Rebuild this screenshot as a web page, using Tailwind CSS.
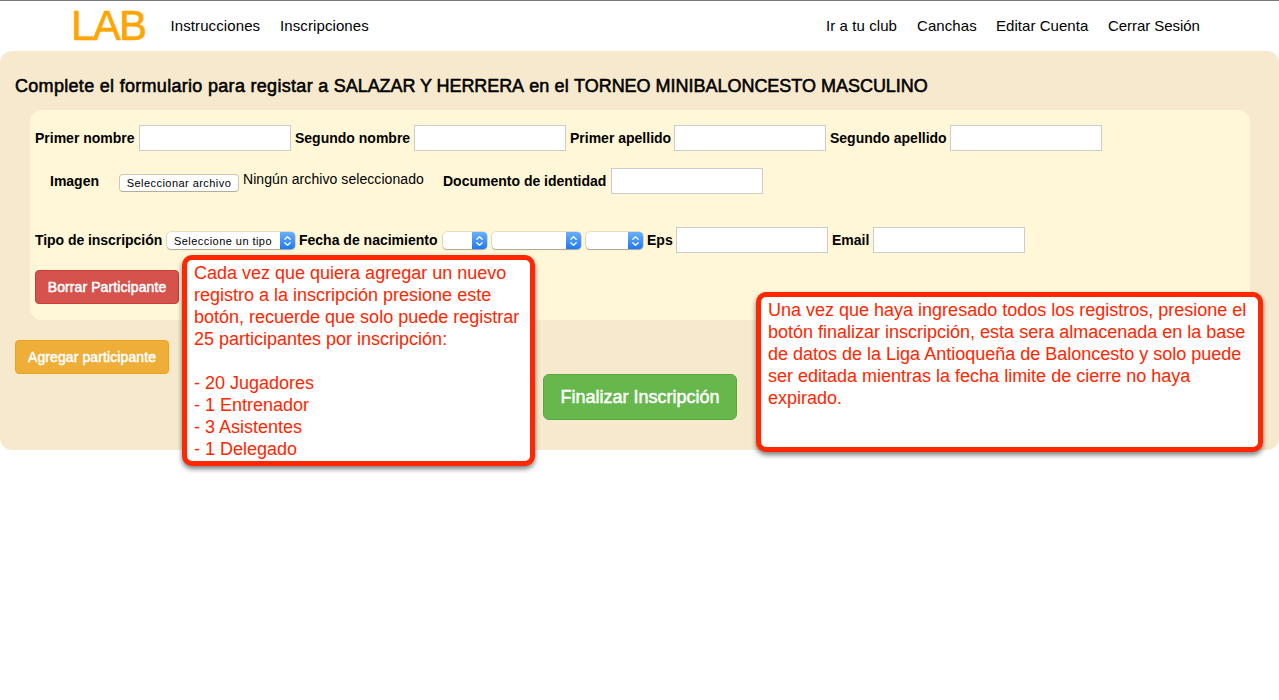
<!DOCTYPE html>
<html lang="es">
<head>
<meta charset="utf-8">
<title>LAB - Inscripciones</title>
<script src="https://cdn.jsdelivr.net/npm/@tailwindcss/browser@4"></script>
</head>
<body class="bg-white text-black font-['Liberation_Sans',Arial,sans-serif] text-sm overflow-hidden">
<svg class="hidden">
  <symbol id="arrows" viewBox="0 0 15 18"><path d="M4.8 7.3 7.5 4.7l2.7 2.6M4.8 10.7l2.7 2.6 2.7-2.6" fill="none" stroke="white" stroke-width="1.3" stroke-linecap="round" stroke-linejoin="round"/></symbol>
</svg>
<div class="relative h-[700px] w-[1279px] overflow-hidden">
  <header class="flex h-[51px] items-center border-t border-[#777] pl-[71px] pr-[79px] text-[15px] whitespace-nowrap">
    <a class="w-[99px] text-[42px] leading-[50px] tracking-[-1.7px] text-[#ffa500] [-webkit-text-stroke:0.6px_#ffa500]">LAB</a>
    <nav class="flex"><a class="w-[110px] pl-[0.5px] tracking-[0.1px]">Instrucciones</a><a class="tracking-[0.1px]">Inscripciones</a></nav>
    <nav class="ml-auto flex"><a class="w-[91px] tracking-[0.08px]">Ir a tu club</a><a class="w-[79px] tracking-[0.08px]">Canchas</a><a class="w-[112px] tracking-[0.05px]">Editar Cuenta</a><a class="w-[92px] tracking-[-0.05px]">Cerrar Sesión</a></nav>
  </header>

  <main class="h-[399px] rounded-xl bg-[#f7e9cd] px-[15px] pt-[25px]">
    <h1 class="h-[34px] text-lg leading-5 whitespace-nowrap [-webkit-text-stroke:0.55px_black]"><span class="tracking-[0.3px]">Complete el formulario para registar a </span><span class="tracking-[-0.07px]">SALAZAR Y HERRERA</span><span class="tracking-[0.13px]"> en el </span><span class="tracking-[-0.02px]">TORNEO MINIBALONCESTO MASCULINO</span></h1>
    <section class="ml-[15px] h-[210px] w-[1220px] rounded-xl bg-[#fff7d8] px-[5px] pt-[15px] whitespace-nowrap">
      <div class="flex h-[26px] items-center font-bold">
        <label class="w-[104px]">Primer nombre</label><input class="mr-1 h-[26px] w-[152px] border border-[#ccc] bg-white">
        <label class="w-[119px]">Segundo nombre</label><input class="mr-1 h-[26px] w-[152px] border border-[#ccc] bg-white">
        <label class="w-[104px]">Primer apellido</label><input class="mr-1 h-[26px] w-[152px] border border-[#ccc] bg-white">
        <label class="w-[120px]">Segundo apellido</label><input class="h-[26px] w-[152px] border border-[#ccc] bg-white">
      </div>
      <div class="mt-[17px] flex h-[26px] items-center pl-[15px] font-bold">
        <label class="w-[69px]">Imagen</label>
        <button class="mt-[3px] h-[18px] w-[120px] rounded-[4px] border border-[#cfc8b0] border-b-[#b5ae98] bg-white text-[11px] leading-4 font-normal tracking-[0.45px]">Seleccionar archivo</button>
        <span class="mb-1 ml-1 w-[200px] font-normal tracking-[0.07px]">Ningún archivo seleccionado</span>
        <label class="w-[168px]">Documento de identidad</label><input class="h-[26px] w-[152px] border border-[#ccc] bg-white">
      </div>
      <div class="mt-[33px] flex h-[26px] items-center font-bold">
        <label class="w-[132px] tracking-[-0.05px]">Tipo de inscripción</label>
        <div class="mt-px mr-1 flex h-[17px] w-[128px] overflow-hidden rounded-[4px] bg-white shadow-[0_1px_1px_rgba(0,0,0,0.25),0_0_0_0.5px_rgba(0,0,0,0.2)]"><span class="flex-1 pl-[7px] text-[11px] leading-[19px] font-normal tracking-[0.45px]">Seleccione un tipo</span><svg class="h-[18px] w-[15px] bg-linear-to-b from-[#68aefb] to-[#1575fa]"><use href="#arrows"/></svg></div>
        <label class="w-[144px]">Fecha de nacimiento</label>
        <div class="mt-px mr-[5px] flex h-[17px] w-[44px] justify-end overflow-hidden rounded-[4px] bg-white shadow-[0_1px_1px_rgba(0,0,0,0.25),0_0_0_0.5px_rgba(0,0,0,0.2)]"><svg class="h-[18px] w-[15px] bg-linear-to-b from-[#68aefb] to-[#1575fa]"><use href="#arrows"/></svg></div>
        <div class="mt-px mr-[5px] flex h-[17px] w-[89px] justify-end overflow-hidden rounded-[4px] bg-white shadow-[0_1px_1px_rgba(0,0,0,0.25),0_0_0_0.5px_rgba(0,0,0,0.2)]"><svg class="h-[18px] w-[15px] bg-linear-to-b from-[#68aefb] to-[#1575fa]"><use href="#arrows"/></svg></div>
        <div class="mt-px mr-1 flex h-[17px] w-[57px] justify-end overflow-hidden rounded-[4px] bg-white shadow-[0_1px_1px_rgba(0,0,0,0.25),0_0_0_0.5px_rgba(0,0,0,0.2)]"><svg class="h-[18px] w-[15px] bg-linear-to-b from-[#68aefb] to-[#1575fa]"><use href="#arrows"/></svg></div>
        <label class="w-[29px]">Eps</label><input class="mr-1 h-[26px] w-[152px] border border-[#ccc] bg-white">
        <label class="w-[41px]">Email</label><input class="h-[26px] w-[152px] border border-[#ccc] bg-white">
      </div>
      <button class="mt-[17px] block h-[34px] w-[144px] rounded-[4px] border border-[#ca3d36] bg-[#d5534c] tracking-[0.1px] text-white [-webkit-text-stroke:0.5px_white]">Borrar Participante</button>
    </section>
    <button class="mt-5 block h-[34px] w-[154px] rounded-[4px] border border-[#eca31a] bg-[#efae38] tracking-[0.1px] whitespace-nowrap text-white [-webkit-text-stroke:0.5px_white]">Agregar participante</button>
    <button class="ml-[528px] block h-[46px] w-[194px] rounded-md border border-[#55aa3c] bg-[#66b84c] text-lg whitespace-nowrap text-white [-webkit-text-stroke:0.5px_white]">Finalizar Inscripción</button>
  </main>

  <aside class="absolute top-[255px] left-[182px] h-[211px] w-[353px] rounded-[10px] border-5 border-[#ff2600] bg-white pt-0.5 pl-[7px] text-lg leading-[22px] whitespace-nowrap text-[#ff2600] shadow-[0_3px_5px_rgba(0,0,0,0.5)]">
    Cada vez que quiera agregar un nuevo<br>registro a la inscripción presione este<br>botón, recuerde que solo puede registrar<br>25 participantes por inscripción:<br><br>- 20 Jugadores<br>- 1 Entrenador<br>- 3 Asistentes<br>- 1 Delegado
  </aside>
  <aside class="absolute top-[292px] left-[756px] h-[160px] w-[507px] rounded-[10px] border-5 border-[#ff2600] bg-white pt-0.5 pl-[7px] text-lg leading-[22px] whitespace-nowrap text-[#ff2600] shadow-[0_3px_5px_rgba(0,0,0,0.5)]">
    Una vez que haya ingresado todos los registros, presione el<br>botón finalizar inscripción, esta sera almacenada en la base<br>de datos de la Liga Antioqueña de Baloncesto y solo puede<br>ser editada mientras la fecha limite de cierre no haya<br>expirado.
  </aside>
</div>
</body>
</html>
